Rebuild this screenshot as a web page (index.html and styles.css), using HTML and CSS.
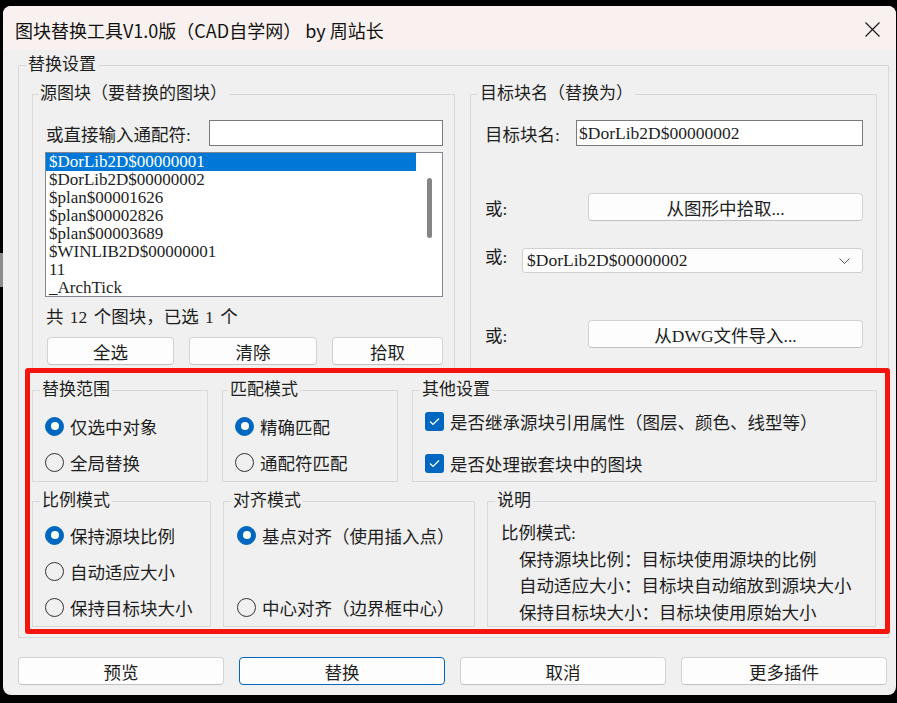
FILE: index.html
```html
<!DOCTYPE html>
<html lang="zh-CN">
<head>
    <meta charset="UTF-8">
    <title>图块替换工具V1.0版</title>
    <link rel="stylesheet" href="styles.css">
</head>
<body>
    <div class="behind"></div>
    <div class="window">
        <div class="titlebar">
            <span class="title">图块替换工具V1.0版（CAD自学网） by 周站长</span>
            <svg class="close" width="15" height="15" viewBox="0 0 15 15">
                <path d="M0.5 0.5L14.5 14.5M14.5 0.5L0.5 14.5" stroke="#1c1c1c" stroke-width="1.2" fill="none"/>
            </svg>
        </div>

        <div class="content">
            <fieldset class="group outer">
                <legend>替换设置</legend>
                <div class="outer-body">
                    <div class="row-top">
                        <fieldset class="group source">
                            <legend class="tight">源图块（要替换的图块）</legend>
                            <div class="source-body">
                                <div class="field-row">
                                    <label>或直接输入通配符:</label>
                                    <div class="textbox wild"></div>
                                </div>
                                <div class="listbox">
                                    <ul class="items">
                                        <li class="selected">$DorLib2D$00000001</li>
                                        <li>$DorLib2D$00000002</li>
                                        <li>$plan$00001626</li>
                                        <li>$plan$00002826</li>
                                        <li>$plan$00003689</li>
                                        <li>$WINLIB2D$00000001</li>
                                        <li>11</li>
                                        <li class="last">_ArchTick</li>
                                    </ul>
                                    <div class="scroll"><div class="thumb"></div></div>
                                </div>
                                <div class="count">共 12 个图块，已选 1 个</div>
                                <div class="btn-row">
                                    <button class="btn" style="width: 127px">全选</button>
                                    <button class="btn" style="width: 128px">清除</button>
                                    <button class="btn" style="width: 111px">拾取</button>
                                </div>
                            </div>
                        </fieldset>

                        <fieldset class="group target">
                            <legend>目标块名（替换为）</legend>
                            <div class="target-body">
                                <div class="t-row name-row">
                                    <label>目标块名:</label>
                                    <div class="textbox name">$DorLib2D$00000002</div>
                                </div>
                                <div class="t-row pick-row">
                                    <label>或:</label>
                                    <button class="btn wide">从图形中拾取...</button>
                                </div>
                                <div class="t-row combo-row">
                                    <label>或:</label>
                                    <div class="combo">
                                        <span>$DorLib2D$00000002</span>
                                        <svg width="11" height="6" viewBox="0 0 11 6"><path d="M0.5 0.5L5.5 5.5L10.5 0.5" stroke="#555" stroke-width="1" fill="none"/></svg>
                                    </div>
                                </div>
                                <div class="t-row pick-row">
                                    <label>或:</label>
                                    <button class="btn wide">从DWG文件导入...</button>
                                </div>
                            </div>
                        </fieldset>
                    </div>

                    <div class="row-mid">
                        <fieldset class="group range">
                            <legend>替换范围</legend>
                            <div class="opts">
                                <div class="opt"><span class="radio on"></span>仅选中对象</div>
                                <div class="opt"><span class="radio"></span>全局替换</div>
                            </div>
                        </fieldset>
                        <fieldset class="group match">
                            <legend class="tight">匹配模式</legend>
                            <div class="opts">
                                <div class="opt"><span class="radio on"></span>精确匹配</div>
                                <div class="opt"><span class="radio"></span>通配符匹配</div>
                            </div>
                        </fieldset>
                        <fieldset class="group other">
                            <legend>其他设置</legend>
                            <div class="checks">
                                <div class="opt">
                                    <span class="check"><svg width="11" height="9" viewBox="0 0 11 9"><path d="M1 4.5L4 7.5L10 1.5" stroke="#fff" stroke-width="1.2" fill="none"/></svg></span>
                                    是否继承源块引用属性（图层、颜色、线型等）
                                </div>
                                <div class="opt">
                                    <span class="check"><svg width="11" height="9" viewBox="0 0 11 9"><path d="M1 4.5L4 7.5L10 1.5" stroke="#fff" stroke-width="1.2" fill="none"/></svg></span>
                                    是否处理嵌套块中的图块
                                </div>
                            </div>
                        </fieldset>
                    </div>

                    <div class="row-bot">
                        <fieldset class="group scale">
                            <legend>比例模式</legend>
                            <div class="opts">
                                <div class="opt"><span class="radio on"></span>保持源块比例</div>
                                <div class="opt"><span class="radio"></span>自动适应大小</div>
                                <div class="opt"><span class="radio"></span>保持目标块大小</div>
                            </div>
                        </fieldset>
                        <fieldset class="group align">
                            <legend>对齐模式</legend>
                            <div class="opts">
                                <div class="opt"><span class="radio on"></span>基点对齐（使用插入点）</div>
                                <div class="opt"></div>
                                <div class="opt"><span class="radio"></span>中心对齐（边界框中心）</div>
                            </div>
                        </fieldset>
                        <fieldset class="group explain">
                            <legend>说明</legend>
                            <div class="notes">
                                <p>比例模式:</p>
                                <p class="indent">保持源块比例：目标块使用源块的比例</p>
                                <p class="indent">自动适应大小：目标块自动缩放到源块大小</p>
                                <p class="indent">保持目标块大小：目标块使用原始大小</p>
                            </div>
                        </fieldset>
                    </div>
                </div>
            </fieldset>

            <div class="footer">
                <button class="btn">预览</button>
                <button class="btn primary">替换</button>
                <button class="btn">取消</button>
                <button class="btn">更多插件</button>
            </div>
        </div>

        <div class="highlight"></div>
    </div>
</body>
</html>
```

FILE: styles.css
```css
* {
    box-sizing: border-box;
}

body {
    position: relative;
    margin: 0;
    height: 703px;
    overflow: hidden;
    background-color: #000000;
    font-family: "Liberation Serif", "Noto Sans CJK SC", serif;
    font-size: 17.5px;
    color: #1e1e1e;
}

/* sliver of another window peeking out on the left */
.behind {
    position: absolute;
    left: 0;
    top: 253px;
    width: 3px;
    height: 34px;
    background-color: #8c8c8c;
}

.window {
    position: relative;
    width: 893px;
    height: 689px;
    margin: 6px 0 0 3px;
    background-color: #f0f0f0;
    border-radius: 8px;
    overflow: hidden;
}

.titlebar {
    height: 44px;
    padding: 3px 16px 0 12px;
    display: flex;
    align-items: center;
    justify-content: space-between;
    background-color: #f9f1ef;
}

.title {
    font-family: "Noto Sans CJK SC", sans-serif;
    font-size: 18px;
    color: #111111;
}

.content {
    padding: 5px 0 0 15px;
}

/* group boxes */
fieldset.group {
    margin: 0;
    padding: 0;
    min-width: 0;
    border: 1px solid #d9d9d9;
}

fieldset.group > legend {
    margin-left: 7px;
    padding: 0 2px;
    height: 20px;
    font-size: 17px;
    line-height: 20px;
}

fieldset.group > legend.tight {
    margin-left: 5px;
}

.outer {
    width: 871px;
    height: 583px;
}

.outer-body {
    padding: 9px 11px 0 13px;
}

.row-top {
    display: flex;
    gap: 15px;
}

.source {
    width: 423px;
    height: 286px;
}

.target {
    width: 407px;
    height: 286px;
}

/* source block list */
.source-body {
    padding: 16px 11px 0 12px;
}

.field-row {
    height: 26px;
    padding-left: 1px;
    display: flex;
    align-items: center;
    justify-content: space-between;
}

.textbox {
    height: 26px;
    background-color: #ffffff;
    border: 1px solid #7a7a7a;
    line-height: 24px;
    padding-left: 2px;
    white-space: nowrap;
}

.textbox.wild {
    width: 234px;
}

.listbox {
    margin-top: 6px;
    height: 145px;
    display: flex;
    background-color: #ffffff;
    border: 1px solid #828790;
    overflow: hidden;
}

.items {
    flex: 1;
    margin: 0;
    padding: 0;
    list-style: none;
}

.items li {
    height: 18px;
    padding-left: 3px;
    font-size: 17px;
    line-height: 18px;
    white-space: nowrap;
}

.items li.last {
    height: 17px;
    overflow: hidden;
}

.items li.selected {
    background-color: #0078d7;
    color: #ffffff;
}

.scroll {
    width: 26px;
    flex: none;
}

.thumb {
    width: 5px;
    height: 60px;
    margin: 25px 0 0 11px;
    background-color: #858585;
    border-radius: 3px;
}

.count {
    margin-top: 9px;
    padding-left: 1px;
    line-height: 22px;
    word-spacing: 2px;
}

.btn-row {
    margin-top: 9px;
    padding-left: 2px;
    display: flex;
    gap: 15px;
}

/* buttons */
.btn {
    height: 28px;
    padding: 0;
    font-family: inherit;
    font-size: 17.5px;
    color: #1e1e1e;
    background-color: #fdfdfd;
    border: 1px solid #d3d3d3;
    border-bottom-color: #c2c2c2;
    border-radius: 4px;
}

.btn.primary {
    border: 1px solid #0067c0;
}

/* target block */
.target-body {
    padding: 16px 13px 0 14px;
}

.t-row {
    display: flex;
    align-items: center;
    justify-content: space-between;
}

.name-row {
    height: 26px;
}

.textbox.name {
    width: 287px;
}

.pick-row {
    height: 28px;
    margin-top: 47px;
}

.btn.wide {
    width: 275px;
}

.combo-row {
    height: 25px;
    margin-top: 27px;
    align-items: flex-start;
}

.combo-row label {
    line-height: 18px;
}

.combo {
    width: 341px;
    height: 25px;
    padding: 0 12px 0 4px;
    display: flex;
    align-items: center;
    justify-content: space-between;
    background-color: #fdfdfd;
    border: 1px solid #d0d0d0;
    border-radius: 3px;
}

/* option groups */
.row-mid {
    margin-top: 10px;
    display: flex;
    gap: 14px;
}

.row-mid .group {
    height: 102px;
}

.range,
.match {
    width: 176px;
}

.other {
    width: 465px;
}

.row-bot {
    margin-top: 9px;
    display: flex;
    gap: 12px;
}

.row-bot .group {
    height: 136px;
}

.scale {
    width: 179px;
}

.align {
    width: 252px;
}

.explain {
    width: 389px;
    margin-left: 1px;
}

.opts {
    padding: 14px 0 0 12px;
    display: flex;
    flex-direction: column;
    gap: 12px;
}

.row-bot .opts {
    padding-top: 12px;
}

.align .opts {
    padding-left: 13px;
}

.checks {
    padding: 9px 0 0 12px;
    display: flex;
    flex-direction: column;
    gap: 18px;
}

.opt {
    height: 24px;
    display: flex;
    align-items: center;
    gap: 6px;
    white-space: nowrap;
}

.radio {
    width: 19px;
    height: 19px;
    flex: none;
    border: 1px solid #333333;
    border-radius: 50%;
}

.radio.on {
    display: flex;
    align-items: center;
    justify-content: center;
    background-color: #0067c0;
    border-color: #0067c0;
}

.radio.on::after {
    content: "";
    width: 8px;
    height: 8px;
    background-color: #ffffff;
    border-radius: 50%;
}

.check {
    width: 19px;
    height: 19px;
    flex: none;
    display: flex;
    align-items: center;
    justify-content: center;
    background-color: #0067c0;
    border-radius: 3px;
}

.notes {
    padding: 9px 0 0 13px;
}

.notes p {
    margin: 0;
    line-height: 26.7px;
    white-space: nowrap;
}

.notes .indent {
    padding-left: 18px;
}

/* dialog buttons */
.footer {
    margin-top: 19px;
    display: flex;
    gap: 15px;
}

.footer .btn {
    width: 206px;
}

/* red annotation frame drawn over the screenshot */
.highlight {
    position: absolute;
    left: 22px;
    top: 362px;
    width: 865px;
    height: 266px;
    border: 5px solid #f5140e;
    border-radius: 3px;
    pointer-events: none;
}
```
